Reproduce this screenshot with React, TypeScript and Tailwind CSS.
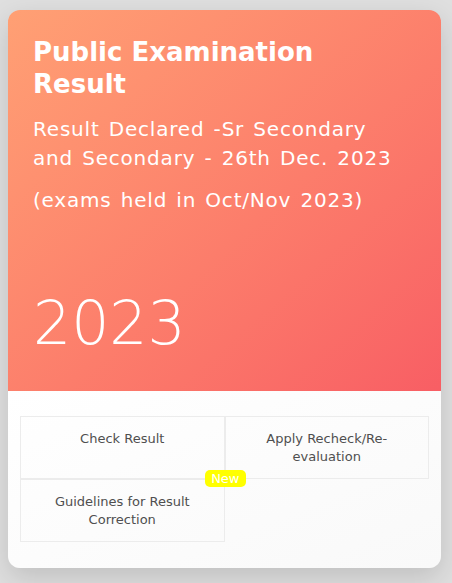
import React from "react";

const links = [
  { label: "Check Result" },
  { label: "Apply Recheck/Re-evaluation" },
  { label: "Guidelines for Result Correction", isNew: true },
];

const App: React.FC = () => {
  return (
    <div
      className="min-h-screen bg-[#dfdfdf] pl-2 pt-[10px]"
      style={{ fontFamily: '"DejaVu Sans", "Noto Sans", sans-serif' }}
    >
      <div className="w-[433px] h-[558px] rounded-[12px] overflow-hidden shadow-[0_10px_28px_rgba(0,0,0,0.14)] flex flex-col">
        {/* Header */}
        <div className="h-[381px] bg-gradient-to-br from-[#ffa074] to-[#f85e64] pl-[25px] pr-[20px] pt-[26px] text-white flex flex-col">
          <h1 className="w-[320px] text-[26px] leading-[32px] font-bold">
            Public Examination Result
          </h1>
          <p className="w-[365px] mt-[15px] text-[20px] leading-[29px] font-normal tracking-[0.8px] [word-spacing:2px]">
            Result Declared -Sr Secondary and Secondary - 26th Dec. 2023
          </p>
          <p className="mt-[13px] text-[20px] leading-[29px] font-normal tracking-[0.8px] [word-spacing:2px]">
            (exams held in Oct/Nov 2023)
          </p>
          <div className="mt-auto mb-[32px] text-[60px] leading-[72px] font-extralight">
            2023
          </div>
        </div>

        {/* Links */}
        <div className="flex-1 bg-gradient-to-br from-white to-[#f9f9f9] px-3 pt-[25px]">
          <div className="grid grid-cols-2">
            {links.map((link) => (
              <div
                key={link.label}
                className="relative h-[63px] border border-[#ececec] px-[30px] pt-[13px] text-center text-[13px] leading-[18px] text-[#4f4f4f]"
              >
                {link.isNew && (
                  <span className="absolute -top-[10px] -right-[22px] z-10 rounded-[5px] bg-[#ffff00] px-[6px] text-[13px] leading-[17px] text-white">
                    New
                  </span>
                )}
                {link.label}
              </div>
            ))}
          </div>
        </div>
      </div>
    </div>
  );
};

export default App;
